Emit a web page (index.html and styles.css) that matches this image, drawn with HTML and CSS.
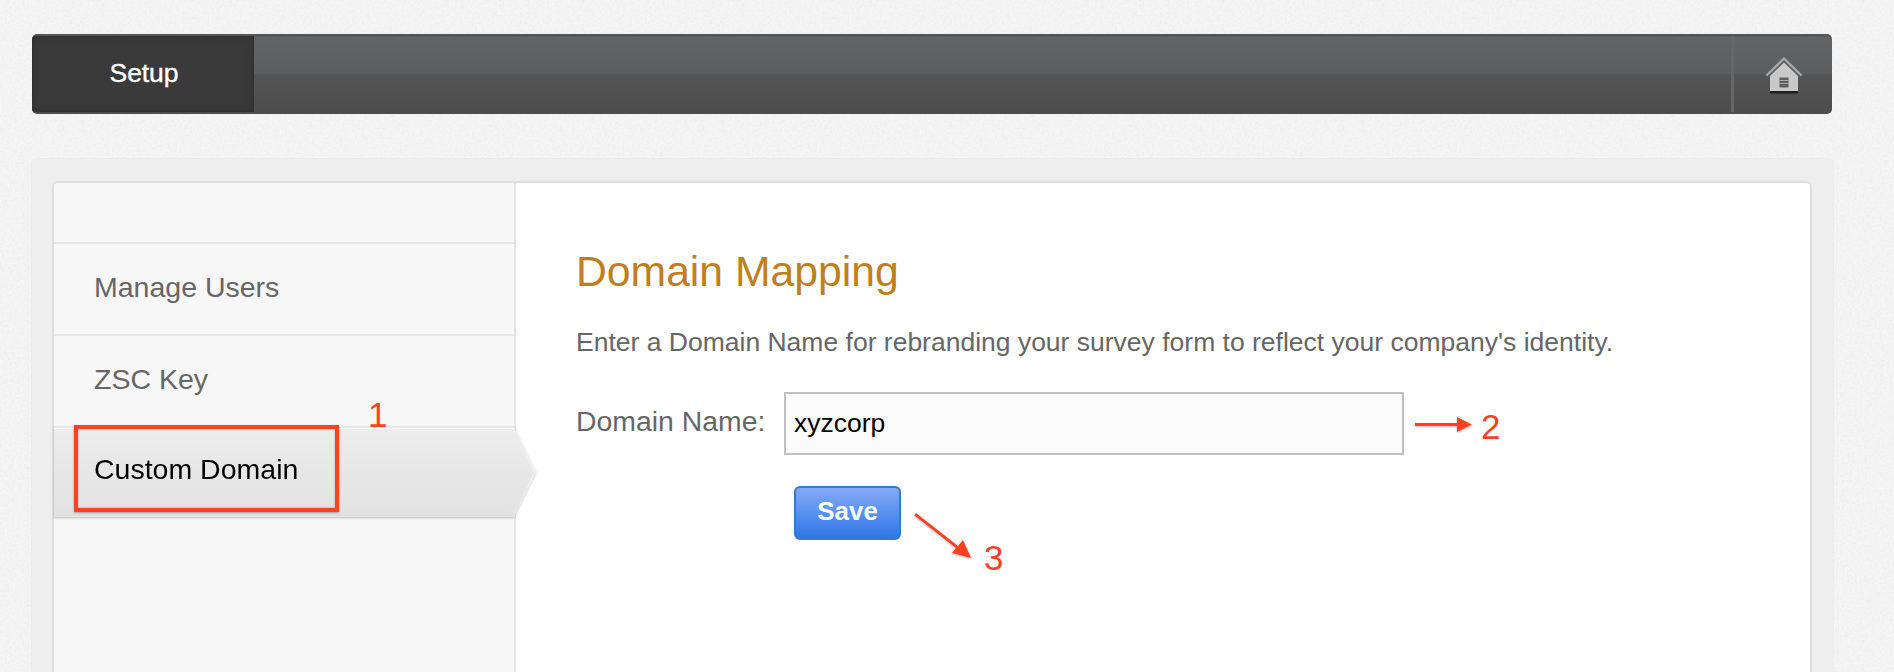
FILE: index.html
```html
<!DOCTYPE html>
<html lang="en">
<head>
<meta charset="utf-8">
<title>Setup - Domain Mapping</title>
<link rel="stylesheet" href="styles.css">
</head>
<body>
<svg class="grain" width="1894" height="672" aria-hidden="true">
  <filter id="g" x="0" y="0" width="100%" height="100%">
    <feTurbulence type="fractalNoise" baseFrequency=".4" numOctaves="2" seed="4"/>
    <feColorMatrix type="matrix" values="0 0 0 0 .5  0 0 0 0 .5  0 0 0 0 .5  .22 0 0 0 -.085"/>
  </filter>
  <rect width="1894" height="672" filter="url(#g)"/>
</svg>
<header class="topbar">
  <a class="tab">Setup</a>
  <div class="home">
    <svg class="home-icon" width="38" height="38" viewBox="0 0 38 38">
      <path d="M1.500 19.500 L19 2.500 L36.500 19.500" fill="none" stroke="#ababab" stroke-width="2.200" stroke-linejoin="round"/>
      <path d="M19 6.500 L33 20 V35 H5 V20 Z" fill="#c9c9c9"/>
      <rect x="5" y="35" width="28" height="2.500" fill="#1f1f1f"/>
      <rect x="14.500" y="21.500" width="9" height="10" fill="#5f5f5f"/>
      <path d="M14.500 24.500 H23.500 M14.500 27.500 H23.500" stroke="#a9a9a9" stroke-width="1"/>
    </svg>
  </div>
</header>
<main class="panel">
  <div class="card">
    <nav class="side">
      <a class="item">Manage Users</a>
      <a class="item">ZSC Key</a>
      <a class="item active">Custom Domain</a>
    </nav>
    <section class="content">
      <h1 class="title">Domain Mapping</h1>
      <p class="lead">Enter a Domain Name for rebranding your survey form to reflect your company's identity.</p>
      <div class="field">
        <label class="label" for="domain">Domain Name:</label>
        <input class="input" id="domain" type="text" value="xyzcorp">
      </div>
      <button class="save" type="button">Save</button>
    </section>
  </div>
</main>
<div class="redbox"></div>
<span class="num num1">1</span>
<span class="num num2">2</span>
<span class="num num3">3</span>
<svg class="arrows" width="1894" height="672" viewBox="0 0 1894 672">
  <defs>
    <filter id="s" x="-20%" y="-50%" width="140%" height="200%"><feDropShadow dx="0" dy="1" stdDeviation="1" flood-color="#000" flood-opacity=".3"/></filter>
  </defs>
  <g filter="url(#s)" fill="#fc4124" stroke="none">
    <path d="M1415 423 H1457 V417 L1472 424.500 L1457 432 V426 H1415 Z"/>
    <path d="M914.500 515.500 L916 513 L958 546 L963 540 L971 558 L952 553 L956 548 Z"/>
  </g>
</svg>
</body>
</html>
```
FILE: styles.css
```css
* { box-sizing: border-box; }
html, body { margin: 0; height: 672px; overflow: hidden; }
body {
  position: relative;
  padding: 34px 0 0 32px;
  background: #f4f4f4;
  font-family: "Liberation Sans", Arial, sans-serif;
  color: #666;
}
.grain { position: absolute; left: 0; top: 0; }
.topbar {
  position: relative;
  display: flex;
  justify-content: space-between;
  width: 1800px;
  height: 80px;
  padding-top: 2px;
  padding-bottom: 2px;
  border-radius: 5px;
  background: linear-gradient(#545455 0, #545455 2px, #636466 3px, #5c5d5f 50%, #545454 50%, #4d4d4d 100%);
}
.tab {
  width: 222px;
  display: flex;
  align-items: center;
  justify-content: center;
  border-radius: 4px 0 0 4px;
  background: #3a3a3a;
  box-shadow: inset 0 0 6px #2a2a2a;
  color: #fff;
  font-size: 26.500px;
  letter-spacing: -.1px;
  -webkit-text-stroke: .4px #fff;
  padding: 0 0 2px 2px;
}
.home {
  width: 101px;
  display: flex;
  align-items: center;
  justify-content: center;
  border-left: 3px solid #666;
  padding-left: 2px;
}
.home-icon { display: block; margin-top: 1px; }
.panel {
  position: relative;
  width: 1803px;
  height: 514px;
  margin: 44px 0 0 -1px;
  padding: 22px 21px 0 20px;
  background: #eee;
  border: 1px solid #ebebeb;
  border-bottom: 0;
  border-radius: 6px 6px 0 0;
}
.card {
  display: flex;
  width: 1760px;
  height: 491px;
  background: #fff;
  border: 2px solid #dedede;
  border-bottom: 0;
  border-radius: 6px 6px 0 0;
}
.side {
  width: 462px;
  flex: none;
  padding-top: 59px;
  background: #f7f7f7;
  border-right: 2px solid #e5e5e5;
  border-radius: 5px 0 0 0;
}
.item {
  display: flex;
  align-items: center;
  height: 92px;
  padding: 0 0 4px 40px;
  border-top: 2px solid #e8e8e8;
  font-size: 28.500px;
}
.item.active {
  position: relative;
  height: 91px;
  width: 460px;
  color: #000;
  background: linear-gradient(#ececec, #e2e2e2);
  box-shadow: inset 0 1px 0 #fff;
  filter: drop-shadow(0 1px 1px rgba(0,0,0,.22));
  padding-bottom: 6px;
}
.item.active::before {
  content: "";
  position: absolute;
  top: -1px;
  bottom: 0;
  left: 100%;
  width: 22px;
  background: #f1f1f1;
  clip-path: polygon(0 0, 100% 50%, 0 100%);
}
.item.active::after {
  content: "";
  position: absolute;
  top: 1px;
  bottom: 1px;
  left: 100%;
  width: 20px;
  background: linear-gradient(#ececec, #e2e2e2);
  clip-path: polygon(0 0, 100% 50%, 0 100%);
}
.content { flex: 1; padding: 64px 0 0 60px; }
.title {
  margin: 0;
  font-size: 42.700px;
  line-height: 48px;
  font-weight: 400;
  color: #c07f1e;
}
.lead {
  margin: 31px 0 0;
  font-size: 26.500px;
  line-height: 32px;
}
.field {
  display: flex;
  align-items: center;
  margin-top: 34px;
}
.label { width: 208px; font-size: 28.400px; padding-bottom: 4px; }
.input {
  width: 620px;
  height: 63px;
  padding: 0 8px;
  border: 2px solid #c0c0c0;
  border-radius: 0;
  background: #fbfbfb;
  color: #000;
  font: 26.500px "Liberation Sans", Arial, sans-serif;
  outline: none;
}
.save {
  display: block;
  width: 107px;
  height: 54px;
  margin: 31px 0 0 218px;
  padding: 0 0 4px;
  border: 2px solid #3a78c8;
  border-radius: 6px;
  background: linear-gradient(#83aaf6, #2f77e6);
  color: #fff;
  font: 700 26px "Liberation Sans", Arial, sans-serif;
}
.redbox {
  position: absolute;
  left: 74px;
  top: 425px;
  width: 265px;
  height: 87px;
  border: 4px solid #fc4124;
  box-shadow: 0 1px 2px rgba(0,0,0,.3), inset 0 0 2px rgba(0,0,0,.35);
}
.num {
  position: absolute;
  color: #fc4124;
  font-size: 35px;
  line-height: 40px;
}
.num1 { left: 368px; top: 395px; }
.num2 { left: 1481px; top: 407px; }
.num3 { left: 984px; top: 538px; }
.arrows { position: absolute; left: 0; top: 0; pointer-events: none; }
```
